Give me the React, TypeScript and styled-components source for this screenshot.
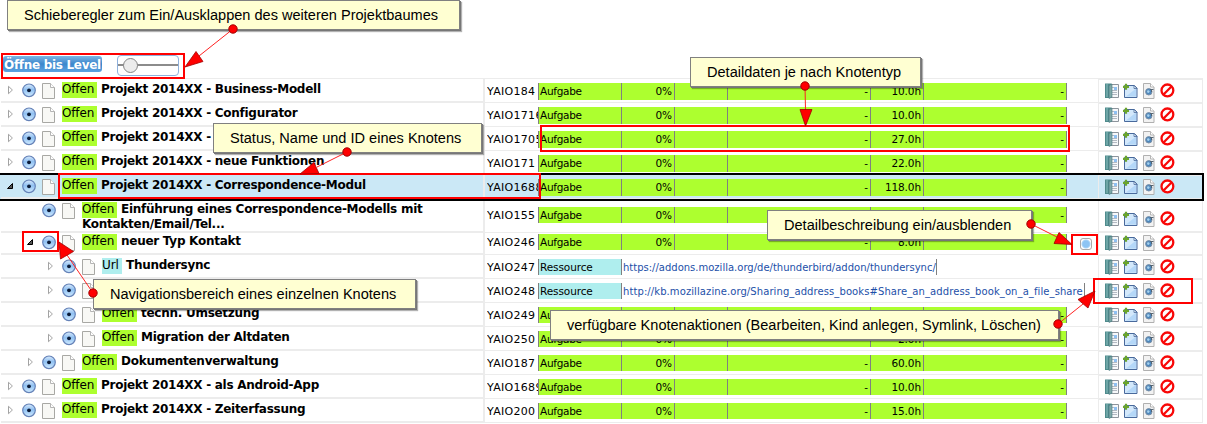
import React from 'react';
import styled, { createGlobalStyle, css } from 'styled-components';

const Global = createGlobalStyle`
  * { box-sizing: border-box; }
  body { margin: 0; background: #fff; overflow: hidden; }
`;

const Page = styled.main`
  position: relative;
  width: 1207px;
  height: 424px;
  overflow: hidden;
  font-family: Verdana, 'DejaVu Sans', sans-serif;
  color: #000;
`;

const LevelBar = styled.div`
  display: flex;
  height: 78px;
  padding: 55px 0 0 3px;
  gap: 14px;
  align-items: flex-start;
`;

const LevelLabel = styled.span`
  width: 99px;
  margin-right: 1px;
  height: 16px;
  margin-top: 1px;
  padding-left: 1px;
  border-radius: 3px;
  background: linear-gradient(#7db4e4, #3b87cc 50%, #5ba3e0);
  color: #fff;
  font-weight: bold;
  font-size: 12px;
  line-height: 18px;
  letter-spacing: -0.3px;
  white-space: nowrap;
`;

const Slider = styled.div`
  display: flex;
  align-items: center;
  width: 62px;
  height: 21px;
  padding-left: 5px;
  border: 1px solid #8fb1dc;
  border-radius: 4px;
  background: linear-gradient(transparent 8px, #8c8c8c 8px, #8c8c8c 10px, transparent 10px);
`;

const Thumb = styled.i`
  width: 15px;
  height: 15px;
  border: 1px solid #858585;
  border-radius: 50%;
  background: #ececec;
`;

const Row = styled.div<{ $h: number; $selected?: boolean }>`
  display: grid;
  grid-template-columns: 484px 614px 105px;
  width: 1203px;
  height: ${p => p.$h}px;
  background: ${p => (p.$selected ? '#cbe8f6' : '#fff')};
`;

const TreeCell = styled.div<{ $level: number }>`
  display: flex;
  align-items: flex-start;
  min-width: 0;
  margin-left: 1px;
  padding-left: ${p => 5 + p.$level * 20}px;
  border-right: 1px solid #ececec;
  border-bottom: 2px solid #ececec;
`;

const Expander = styled.span`
  display: flex;
  width: 16px;
  padding-top: 6px;
`;

const NodeIcon = styled.span`
  display: flex;
  width: 20px;
  padding-top: 4px;
`;

const Title = styled.div`
  flex: 1;
  padding-top: 3px;
  font-size: 12px;
  line-height: 14px;
  font-weight: bold;
  letter-spacing: -0.27px;
  white-space: pre-line;
`;

const Status = styled.span<{ $url?: boolean }>`
  display: inline-block;
  width: ${p => (p.$url ? 20 : 35)}px;
  height: 16px;
  margin: -1px 4px -1px 0;
  line-height: 15px;
  font-weight: normal;
  letter-spacing: -0.15px;
  background: ${p => (p.$url ? '#afeeee' : '#adff2f')};
`;

const DataCell = styled.div<{ $pad: number }>`
  display: flex;
  align-items: flex-start;
  padding: ${p => p.$pad}px 0 0 2px;
  border-left: 1px solid #ececec;
  border-bottom: 1px solid #ececec;
  font-size: 10.5px;
  letter-spacing: -0.1px;
`;

const NodeId = styled.span`
  width: 51px;
  height: 17px;
  overflow: hidden;
  line-height: 18px;
  font-size: 11px;
  letter-spacing: 0.3px;
  white-space: nowrap;
`;

const field = css<{ $h: number }>`
  height: ${p => p.$h}px;
  line-height: 16px;
  border-right: 1px solid #808080;
  white-space: nowrap;
`;

const Kind = styled.span<{ $h: number; $url?: boolean }>`
  ${field}
  width: 84px;
  padding-left: 1px;
  border-left: 1px solid #808080;
  background: ${p => (p.$url ? '#afeeee' : '#adff2f')};
  letter-spacing: ${p => (p.$url ? -0.1 : -0.3)}px;
`;

const Value = styled.span<{ $h: number; $w: number }>`
  ${field}
  width: ${p => p.$w}px;
  padding-right: 2px;
  text-align: right;
  background: #adff2f;
`;

const Link = styled.a<{ $h: number; $w: number; $ls: number }>`
  ${field}
  line-height: 17px;
  width: ${p => p.$w}px;
  padding-left: 1px;
  font-size: 10px;
  letter-spacing: ${p => p.$ls}px;
  color: #1c4fa8;
`;

const DetailToggle = styled.i`
  width: 12px;
  height: 12px;
  margin: 4px 0 0 13px;
  border: 1px solid #aaa;
  border-radius: 3px;
  background: radial-gradient(circle at 50% 50%, #8cc4f4 0 3px, #a9d4f7 4px, #fff 5px);
`;

const ActionCell = styled.div<{ $pad: number }>`
  display: flex;
  align-items: flex-start;
  gap: 2px;
  padding: ${p => p.$pad}px 0 0 6px;
  border: 1px solid #ececec;
`;

const Outline = styled.div<{ $x: number; $y: number; $w: number; $h: number; $black?: boolean }>`
  position: absolute;
  left: ${p => p.$x}px;
  top: ${p => p.$y}px;
  width: ${p => p.$w}px;
  height: ${p => p.$h}px;
  border: 2px solid ${p => (p.$black ? '#000' : '#f00')};
  ${p => p.$black && 'border-left: 0;'}
`;

const Callout = styled.div<{ $x: number; $y: number; $w: number }>`
  position: absolute;
  left: ${p => p.$x}px;
  top: ${p => p.$y}px;
  width: ${p => p.$w}px;
  height: 30px;
  padding-left: 16px;
  border: 1px solid #808080;
  background: #ffffd2;
  box-shadow: 1px 1px 0 #777, 2px 2px 1px rgba(0, 0, 0, 0.3);
  font: 14.55px/29px 'Liberation Sans', Arial, sans-serif;
  white-space: nowrap;
`;

const Arrows = styled.svg`
  position: absolute;
  inset: 0;
`;

const Triangle = ({ open }: { open?: boolean }) => (
  <svg width="10" height="10" viewBox="0 0 10 10">
    {open ? (
      <path d="M1.5 7.5 6.5 2.500v5z" fill="#555" stroke="#000" />
    ) : (
      <path d="M2.5 1.300v7.4L6.4 5z" fill="#fff" stroke="#999" strokeWidth=".9" />
    )}
  </svg>
);

const Radio = () => (
  <svg width="14" height="15" viewBox="0 0 14 15">
    <defs>
      <linearGradient id="ball" x1="0" y1="0" x2="0" y2="1">
        <stop offset="0" stopColor="#d9eafb" />
        <stop offset=".45" stopColor="#8fc0f2" />
        <stop offset="1" stopColor="#d2ecff" />
      </linearGradient>
    </defs>
    <circle cx="7" cy="7.3" r="6.3" fill="url(#ball)" stroke="#6582b8" strokeWidth="1.2" />
    <circle cx="7" cy="7.3" r="1.900" fill="#0c1c38" />
  </svg>
);

const Doc = () => (
  <svg width="14" height="16" viewBox="0 0 14 16">
    <path d="M.5.5h8l4 4v11H.5z" fill="#f8f8f5" stroke="#a8a8a4" />
    <path d="M8.500.5v4h4" fill="#fff" stroke="#b5b5b5" />
  </svg>
);

const EditIcon = () => (
  <svg width="16" height="16" viewBox="0 0 16 16">
    <path d="M4.500 1.500h9v13h-9z" fill="#f6f8fa" stroke="#8d949c" />
    <path d="M7 4.500h5M7 7.500h5M7 9.500h5M7 11.500h5" stroke="#b3bac2" />
    <path d="M9 4h3v3H9z" fill="#8fc0f2" />
    <path d="M0 .5h6.500V15H0z" fill="#4f8b8c" />
    <path d="M1 1h2v13H1z" fill="#6da5a6" />
    <path d="M4 2.500l3-1.500v13l-3 1.500z" fill="#7fa8a8" stroke="#46777d" strokeWidth=".6" />
  </svg>
);

const AddIcon = () => (
  <svg width="16" height="16" viewBox="0 0 16 16">
    <path d="M1.500 2.500h10l2.500 2.500v9.500H1.500z" fill="#d3e8fb" stroke="#48699c" />
    <path d="M3 13.500l10-8v8z" fill="#b4d7f8" />
    <path d="M11 2.500v3h3z" fill="#fff" stroke="#48699c" strokeWidth=".8" />
    <path d="M3 .800v6M0 3.800h6" stroke="#6ba52c" strokeWidth="2.200" />
  </svg>
);

const SymlinkIcon = () => (
  <svg width="16" height="16" viewBox="0 0 16 16">
    <path d="M2.500.5h7l3.500 3.500v11.500H2.500z" fill="#f2f2f2" stroke="#b0b0b0" />
    <path d="M9.500.5V4H13" fill="#fff" stroke="#b5b5b5" />
    <circle cx="7.800" cy="8.800" r="3.200" fill="#4c87bd" stroke="#7a8fa6" />
    <circle cx="7.300" cy="8.600" r="1.300" fill="#a6d1ee" />
    <path d="M9 6.500h3.500M10.500 7v2" fill="none" stroke="#566675" />
  </svg>
);

const DeleteIcon = () => (
  <svg width="16" height="16" viewBox="0 0 16 16">
    <circle cx="8.400" cy="7.400" r="5.900" fill="#fff" stroke="#f80808" strokeWidth="2.300" />
    <path d="M4.500 11.500l8-8" stroke="#f80808" strokeWidth="2.300" />
  </svg>
);

type Item = {
  id: string;
  title: string;
  level: number;
  hours?: string;
  url?: string;
  linkWidth?: number;
  linkSpacing?: number;
  state?: 'open' | 'closed' | 'leaf';
  selected?: boolean;
  height?: number;
  dataPad?: number;
  actionPad?: number;
  toggle?: boolean;
};

const items: Item[] = [
  { id: 'YAIO184', title: 'Projekt 2014XX - Business-Modell', level: 0, hours: '10.0h' },
  { id: 'YAIO1716', title: 'Projekt 2014XX - Configurator', level: 0, hours: '10.0h' },
  { id: 'YAIO1705', title: 'Projekt 2014XX -', level: 0, hours: '27.0h' },
  { id: 'YAIO171', title: 'Projekt 2014XX - neue Funktionen', level: 0, hours: '22.0h' },
  { id: 'YAIO1688', title: 'Projekt 2014XX - Correspondence-Modul', level: 0, hours: '118.0h', state: 'open', selected: true },
  { id: 'YAIO155', title: 'Einführung eines Correspondence-Modells mit\nKontakten/Email/Tel...', level: 1, hours: '', state: 'leaf', height: 32, dataPad: 8, actionPad: 11 },
  { id: 'YAIO246', title: 'neuer Typ Kontakt', level: 1, hours: '8.0h', state: 'open', dataPad: 3, toggle: true },
  { id: 'YAIO247', title: 'Thundersync', level: 2, url: 'https://addons.mozilla.org/de/thunderbird/addon/thundersync/', linkWidth: 315 },
  { id: 'YAIO248', title: '', level: 2, url: 'http://kb.mozillazine.org/Sharing_address_books#Share_an_address_book_on_a_file_share', linkWidth: 463, linkSpacing: 0.09 },
  { id: 'YAIO249', title: 'techn. Umsetzung', level: 2, hours: '' },
  { id: 'YAIO250', title: 'Migration der Altdaten', level: 2, hours: '2.0h' },
  { id: 'YAIO187', title: 'Dokumentenverwaltung', level: 1, hours: '60.0h' },
  { id: 'YAIO1689', title: 'Projekt 2014XX - als Android-App', level: 0, hours: '10.0h' },
  { id: 'YAIO200', title: 'Projekt 2014XX - Zeiterfassung', level: 0, hours: '15.0h' },
];

const TreeRow = ({ item, index }: { item: Item; index: number }) => {
  const h = index < 5 ? 17 : 16;
  return (
    <Row $h={item.height ?? 24} $selected={item.selected}>
      <TreeCell $level={item.level}>
        <Expander>{item.state !== 'leaf' && <Triangle open={item.state === 'open'} />}</Expander>
        <NodeIcon><Radio /></NodeIcon>
        <NodeIcon><Doc /></NodeIcon>
        <Title>
          <Status $url={!!item.url}>{item.url ? 'Url' : 'Offen'}</Status>
          {item.title}
        </Title>
      </TreeCell>
      <DataCell $pad={item.dataPad ?? 4}>
        <NodeId>{item.id}</NodeId>
        <Kind $h={h} $url={!!item.url}>{item.url ? 'Ressource' : 'Aufgabe'}</Kind>
        {item.url ? (
          <Link $h={h} $w={item.linkWidth ?? 300} $ls={item.linkSpacing ?? 0}>{item.url}</Link>
        ) : (
          <>
            <Value $h={h} $w={53}>0%</Value>
            <Value $h={h} $w={53} />
            <Value $h={h} $w={143}>-</Value>
            <Value $h={h} $w={53}>{item.hours}</Value>
            <Value $h={h} $w={143}>-</Value>
          </>
        )}
        {item.toggle && <DetailToggle />}
      </DataCell>
      <ActionCell $pad={item.actionPad ?? 3}>
        <EditIcon />
        <AddIcon />
        <SymlinkIcon />
        <DeleteIcon />
      </ActionCell>
    </Row>
  );
};

const Tree = styled.section`
  width: 1203px;
  border-top: 1px solid #ececec;
`;

const arrows = [
  { from: [233, 29], head: '185,67 196,51.500 203,61.500', to: [199, 56] },
  { from: [805, 86], head: '805.500,126 800,109.500 812,109.500', to: [805.5, 110] },
  { from: [347, 152], head: '300,174 314,162.500 319,173.500', to: [317, 167] },
  { from: [1031, 224], head: '1072,244.500 1059,232.500 1054,243.500', to: [1057, 237] },
  { from: [93, 293], head: '59,242 60.500,259 73.500,251.500', to: [67, 255] },
  { from: [1058, 324], head: '1095,291 1078,299.500 1088,308', to: [1083, 304] },
];

export default function App() {
  return (
    <Page>
      <Global />
      <LevelBar>
        <LevelLabel>Öffne bis Level</LevelLabel>
        <Slider><Thumb /></Slider>
      </LevelBar>
      <Tree>
        {items.map((item, i) => <TreeRow key={item.id} item={item} index={i} />)}
      </Tree>
      <Outline $black $x={0} $y={173} $w={1204} $h={28} />
      <Outline $x={1} $y={53} $w={184} $h={26} />
      <Outline $x={58} $y={173} $w={483} $h={26} />
      <Outline $x={540} $y={125} $w={530} $h={27} />
      <Outline $x={22} $y={231} $w={37} $h={21} />
      <Outline $x={1071} $y={234} $w={27} $h={21} />
      <Outline $x={1093} $y={278} $w={100} $h={26} />
      <Callout $x={7} $y={0} $w={453}>Schieberegler zum Ein/Ausklappen des weiteren Projektbaumes</Callout>
      <Callout $x={690} $y={57} $w={231}>Detaildaten je nach Knotentyp</Callout>
      <Callout $x={213} $y={123} $w={269}>Status, Name und ID eines Knotens</Callout>
      <Callout $x={767} $y={210} $w={265}>Detailbeschreibung ein/ausblenden</Callout>
      <Callout $x={93} $y={279} $w={323}>Navigationsbereich eines einzelnen Knotens</Callout>
      <Callout $x={550} $y={310} $w={509}>verfügbare Knotenaktionen (Bearbeiten, Kind anlegen, Symlink, Löschen)</Callout>
      <Arrows width="1207" height="424" viewBox="0 0 1207 424">
        {arrows.map(a => (
          <g key={a.head}>
            <line x1={a.from[0]} y1={a.from[1]} x2={a.to[0]} y2={a.to[1]} stroke="#f22" />
            <polygon points={a.head} fill="#f00" stroke="#a00000" strokeWidth=".8" />
            <circle cx={a.from[0]} cy={a.from[1]} r="4.200" fill="#f00" stroke="#a00000" />
          </g>
        ))}
      </Arrows>
    </Page>
  );
}
